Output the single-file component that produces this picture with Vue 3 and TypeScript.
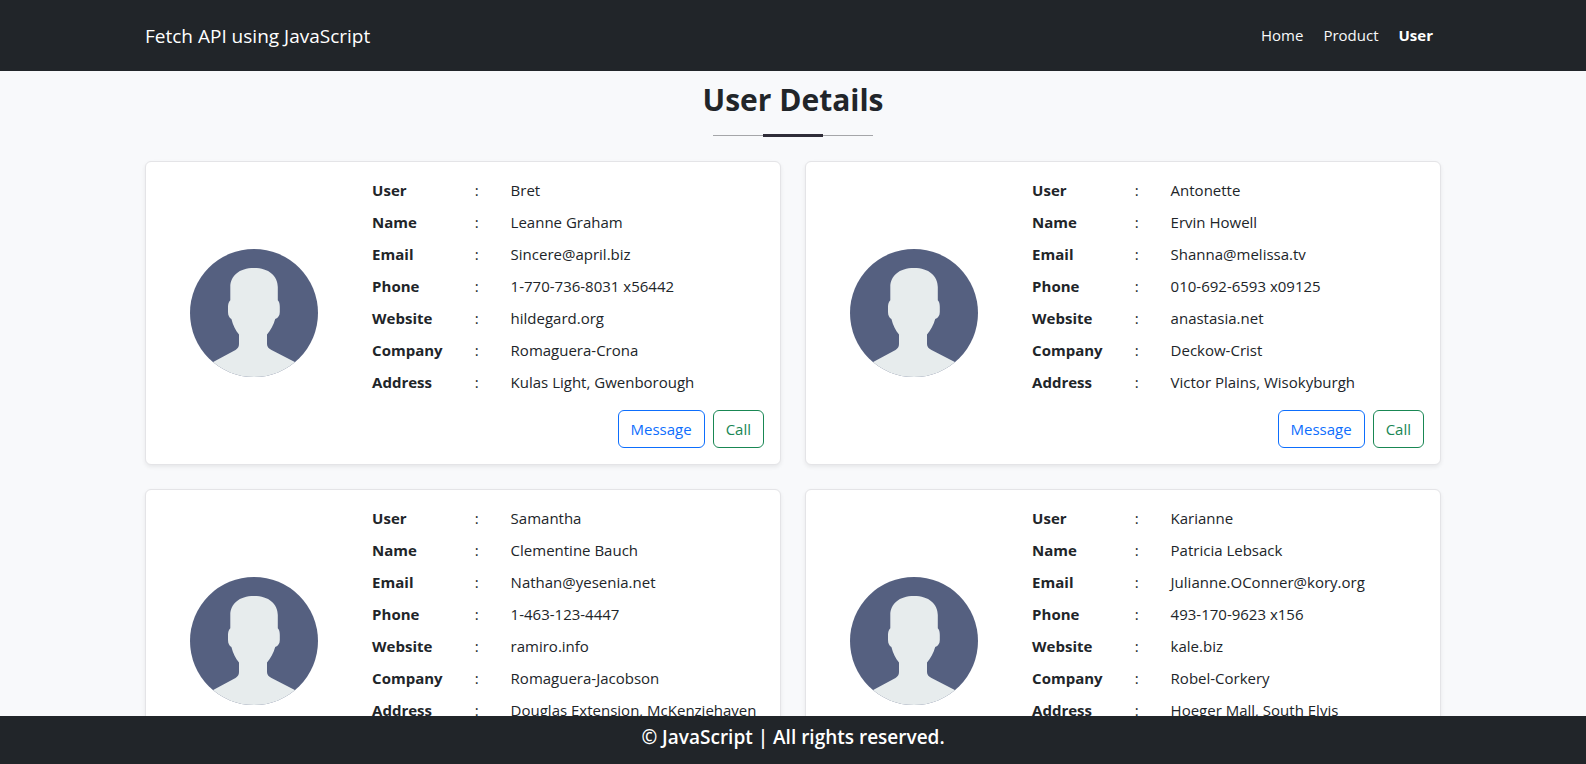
<script setup lang="ts">
interface User {
  user: string
  name: string
  email: string
  phone: string
  website: string
  company: string
  address: string
}

const fields: { key: keyof User; label: string }[] = [
  { key: 'user', label: 'User' },
  { key: 'name', label: 'Name' },
  { key: 'email', label: 'Email' },
  { key: 'phone', label: 'Phone' },
  { key: 'website', label: 'Website' },
  { key: 'company', label: 'Company' },
  { key: 'address', label: 'Address' },
]

const links = [
  { label: 'Home', active: false },
  { label: 'Product', active: false },
  { label: 'User', active: true },
]

const users: User[] = [
  {
    user: 'Bret',
    name: 'Leanne Graham',
    email: 'Sincere@april.biz',
    phone: '1-770-736-8031 x56442',
    website: 'hildegard.org',
    company: 'Romaguera-Crona',
    address: 'Kulas Light, Gwenborough',
  },
  {
    user: 'Antonette',
    name: 'Ervin Howell',
    email: 'Shanna@melissa.tv',
    phone: '010-692-6593 x09125',
    website: 'anastasia.net',
    company: 'Deckow-Crist',
    address: 'Victor Plains, Wisokyburgh',
  },
  {
    user: 'Samantha',
    name: 'Clementine Bauch',
    email: 'Nathan@yesenia.net',
    phone: '1-463-123-4447',
    website: 'ramiro.info',
    company: 'Romaguera-Jacobson',
    address: 'Douglas Extension, McKenziehaven',
  },
  {
    user: 'Karianne',
    name: 'Patricia Lebsack',
    email: 'Julianne.OConner@kory.org',
    phone: '493-170-9623 x156',
    website: 'kale.biz',
    company: 'Robel-Corkery',
    address: 'Hoeger Mall, South Elvis',
  },
]
</script>

<template>
  <div class="page">
    <header class="topbar">
      <div class="container topbar-inner">
        <a class="brand" href="#">Fetch API using JavaScript</a>
        <nav class="nav">
          <a
            v-for="link in links"
            :key="link.label"
            href="#"
            class="nav-link"
            :class="{ active: link.active }"
            :aria-current="link.active ? 'page' : undefined"
          >{{ link.label }}</a>
        </nav>
      </div>
    </header>

    <main class="content">
      <div class="container">
        <h1 class="title">User Details</h1>
        <div class="divider"><span class="divider-accent"></span></div>

        <div class="cards">
          <article v-for="u in users" :key="u.user" class="card">
            <div class="photo">
              <svg class="avatar" viewBox="0 0 128 128" aria-hidden="true">
                <rect width="128" height="128" fill="#556080" />
                <path
                  fill="#e7eced"
                  d="M64 19C49 19 40.3 27 40.3 38V51.2C38.8 52.4 38 55 38 58V63C38 66.5 39.3 68.8 41.4 70C43 76 45.5 81.500 49 85.5V95C49 97.8 47.8 99.6 45.5 101L22.7 113.2V128H105.300V113.200L81.5 101C78.5 99.5 77 97.5 77 95V85.5C80.5 81.5 83.5 76 85.2 70C88.3 68.8 89.8 66.5 89.8 63V58C89.8 55 89.3 52.6 87.8 51.2V38C87.800 27 79 19 64 19Z"
                />
              </svg>
            </div>
            <div class="info">
              <table class="details">
                <tbody>
                  <tr v-for="f in fields" :key="f.key">
                    <th scope="row">{{ f.label }}</th>
                    <td>:</td>
                    <td>{{ u[f.key] }}</td>
                  </tr>
                </tbody>
              </table>
              <div class="actions">
                <button type="button" class="btn message">Message</button>
                <button type="button" class="btn call">Call</button>
              </div>
            </div>
          </article>
        </div>
      </div>
    </main>

    <footer class="footer">© JavaScript | All rights reserved.</footer>
  </div>
</template>

<style>
body {
  margin: 0;
  background: #f8f9fb;
}
</style>

<style scoped>
.page {
  box-sizing: border-box;
  height: 100vh;
  display: flex;
  flex-direction: column;
  overflow: hidden;
  color: #212529;
  font-family: "Open Sans", "Noto Sans", sans-serif;
  font-size: 15px;
  line-height: 24px;
}

.container {
  box-sizing: border-box;
  width: 100%;
  max-width: 1320px;
  margin: 0 auto;
  padding: 0 12px;
}

.topbar {
  flex: none;
  background: #212529;
}

.topbar-inner {
  display: flex;
  align-items: center;
  justify-content: space-between;
  min-height: 71px;
}

.brand {
  color: #fff;
  font-size: 19px;
  line-height: 30px;
  text-decoration: none;
}

.nav {
  display: flex;
  gap: 4px;
}

.nav-link {
  padding: 7px 8px 9px;
  color: #f8f9fa;
  text-decoration: none;
}

.nav-link.active {
  color: #fff;
  font-weight: 700;
}

.content {
  flex: 1;
  min-height: 0;
  overflow-y: auto;
  scrollbar-width: none;
}

.content > .container {
  display: flow-root;
}

.title {
  margin: 9px 0 15px;
  font-size: 30px;
  line-height: 39px;
  font-weight: 700;
  text-align: center;
}

.divider {
  display: flex;
  justify-content: center;
  width: 160px;
  margin: 0 auto 24px;
  background: linear-gradient(#a5a6a9, #a5a6a9) center / 100% 1px no-repeat;
}

.divider-accent {
  width: 60px;
  height: 3px;
  background: #2f2d38;
}

.cards {
  display: grid;
  grid-template-columns: repeat(2, minmax(0, 1fr));
  gap: 24px;
  padding-bottom: 24px;
}

.card {
  box-sizing: border-box;
  display: grid;
  grid-template-columns: 34% minmax(0, 1fr);
  padding: 12px 16px 16px 0;
  border: 1px solid #e4e4e7;
  border-radius: 6px;
  background: #fff;
  box-shadow: 0 2px 4px rgba(0, 0, 0, 0.075);
}

.photo {
  display: flex;
  align-items: center;
  justify-content: center;
  padding: 4px 0 0 6px;
}

.avatar {
  width: 128px;
  height: 128px;
  border-radius: 50%;
}

.info {
  min-width: 0;
}

.details {
  border-collapse: collapse;
}

.details th,
.details td {
  padding: 4px 16px;
  text-align: left;
  white-space: nowrap;
}

.details th {
  font-weight: 700;
}

.actions {
  display: flex;
  justify-content: flex-end;
  gap: 8px;
  margin-top: 12px;
}

.btn {
  padding: 6px 12px;
  border: 1px solid currentColor;
  border-radius: 6px;
  background: transparent;
  font: inherit;
  cursor: pointer;
}

.message {
  color: #0d6efd;
}

.call {
  color: #198754;
}

.footer {
  flex: none;
  padding: 6px 12px 12px;
  background: #212529;
  color: #fff;
  font-size: 19px;
  line-height: 30px;
  font-weight: 600;
  text-align: center;
}
</style>
